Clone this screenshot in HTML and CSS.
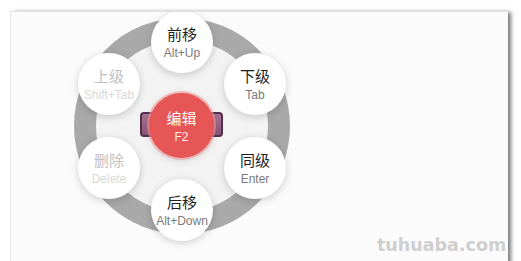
FILE: index.html
```html
<!DOCTYPE html>
<html lang="zh">
<head>
<meta charset="utf-8">
<link rel="stylesheet" href="styles.css">
</head>
<body>
<div class="panel">
  <div class="wheel">
    <div class="ring"></div>
    <div class="bar"></div>
    <div class="node n-top"><span class="t">前移</span><span class="k">Alt+Up</span></div>
    <div class="node n-ur"><span class="t">下级</span><span class="k">Tab</span></div>
    <div class="node n-lr"><span class="t">同级</span><span class="k">Enter</span></div>
    <div class="node n-bot"><span class="t">后移</span><span class="k">Alt+Down</span></div>
    <div class="node n-ll off"><span class="t">删除</span><span class="k">Delete</span></div>
    <div class="node n-ul off"><span class="t">上级</span><span class="k">Shift+Tab</span></div>
    <div class="node center"><span class="t">编辑</span><span class="k">F2</span></div>
  </div>
  <div class="mark">tuhuaba.com</div>
</div>
</body>
</html>
```

FILE: styles.css
```css
html, body {
  margin: 0;
  padding: 0;
  background: #ffffff;
}
body {
  width: 521px;
  height: 261px;
  overflow: hidden;
  font-family: "Liberation Sans", "Noto Sans CJK SC", sans-serif;
}
.panel {
  position: relative;
  margin: 11px 0 0 10px;
  width: 497px;
  height: 260px;
  background: #fbfbfb;
  border-top: 1px solid #e2e2e2;
  border-left: 1px solid #e6e6e6;
  box-shadow: 4px 0 4px -1px #7a7a7a;
  overflow: hidden;
}
.wheel {
  position: relative;
  margin: 6px 0 0 63px;
  width: 216px;
  height: 216px;
}
.ring {
  width: 216px;
  height: 216px;
  box-sizing: border-box;
  border-radius: 50%;
  border: 22px solid #a9a9a9;
  background: #f3f3f3;
}
.bar {
  position: absolute;
  left: 66px;
  top: 94px;
  width: 83px;
  height: 25px;
  box-sizing: border-box;
  border: 2px solid #56304a;
  border-radius: 4px;
  background: linear-gradient(#a77595, #8a5679);
}
.node {
  position: absolute;
  width: 62px;
  height: 62px;
  border-radius: 50%;
  background: #ffffff;
  box-shadow: 0 2px 9px rgba(0, 0, 0, 0.18);
  display: flex;
  flex-direction: column;
  align-items: center;
  justify-content: center;
  gap: 2px;
}
.node .t {
  font-family: "Noto Sans CJK SC", sans-serif;
  font-size: 15px;
  line-height: 20px;
  color: #1e1e1e;
}
.node .k {
  font-size: 12px;
  line-height: 14px;
  color: #7a7a7a;
}
.node.off .t { color: #c2c2c2; }
.node.off .k { color: #d8d8d8; }
.n-top { left: 77px; top: -7px; }
.n-ur { left: 150px; top: 35px; }
.n-lr { left: 150px; top: 119px; }
.n-bot { left: 77px; top: 161px; }
.n-ll { left: 4px; top: 119px; }
.n-ul { left: 4px; top: 35px; }
.center {
  left: 75px;
  top: 75px;
  width: 65px;
  height: 65px;
  background: #e65656;
  box-shadow: 0 0 0 2px rgba(245, 150, 150, 0.6), 0 2px 8px rgba(0, 0, 0, 0.15);
}
.center .t { color: #ffffff; }
.center .k { color: #ffecec; }
.mark {
  position: absolute;
  left: 366px;
  top: 222px;
  font-family: "DejaVu Sans", sans-serif;
  font-weight: bold;
  font-size: 17.5px;
  line-height: 22px;
  color: #cfcfcf;
}
```
